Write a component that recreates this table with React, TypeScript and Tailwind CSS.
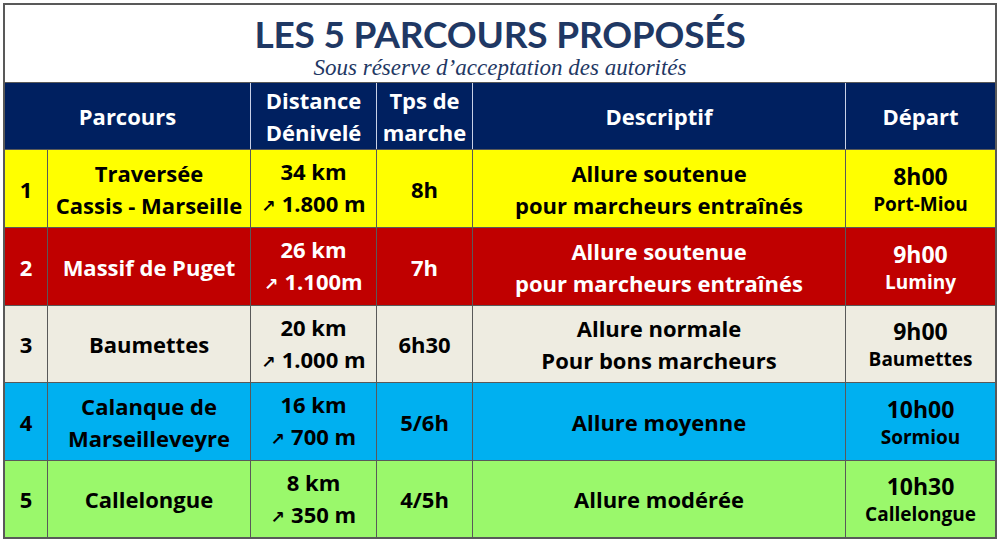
const rows = [
  {
    n: '1',
    name: ['Traversée', 'Cassis - Marseille'],
    km: '34 km',
    elev: '1.800 m',
    time: '8h',
    desc: ['Allure soutenue', 'pour marcheurs entraînés'],
    hour: '8h00',
    place: 'Port-Miou',
    bg: 'bg-[#ffff00]',
    text: 'text-black',
    h: 'h-[78px]',
  },
  {
    n: '2',
    name: ['Massif de Puget'],
    km: '26 km',
    elev: '1.100m',
    time: '7h',
    desc: ['Allure soutenue', 'pour marcheurs entraînés'],
    hour: '9h00',
    place: 'Luminy',
    bg: 'bg-[#c00000]',
    text: 'text-white',
    h: 'h-[78px]',
  },
  {
    n: '3',
    name: ['Baumettes'],
    km: '20 km',
    elev: '1.000 m',
    time: '6h30',
    desc: ['Allure normale', 'Pour bons marcheurs'],
    hour: '9h00',
    place: 'Baumettes',
    bg: 'bg-[#eeece1]',
    text: 'text-black',
    h: 'h-[77px]',
  },
  {
    n: '4',
    name: ['Calanque de', 'Marseilleveyre'],
    km: '16 km',
    elev: '700 m',
    time: '5/6h',
    desc: ['Allure moyenne'],
    hour: '10h00',
    place: 'Sormiou',
    bg: 'bg-[#00b0f0]',
    text: 'text-black',
    h: 'h-[78px]',
  },
  {
    n: '5',
    name: ['Callelongue'],
    km: '8 km',
    elev: '350 m',
    time: '4/5h',
    desc: ['Allure modérée'],
    hour: '10h30',
    place: 'Callelongue',
    bg: 'bg-[#9af86b]',
    text: 'text-black',
    h: 'h-[77px]',
  },
];

const cols = 'grid grid-cols-[43px_203px_126px_96px_373px_149px]';
const cell = 'flex flex-col items-center justify-center text-center border-r border-[#595959]';

export default function App() {
  return (
    <div className="w-[1000px] h-[542px] bg-white pt-[3px] pl-[3px]">
      <div
        className="w-[994px] border-2 border-[#595959] bg-white"
        style={{ fontFamily: '"Open Sans", Lato, sans-serif' }}
      >
        <div className="h-[78px] flex flex-col items-center border-b border-[#595959]">
          <h1
            className="mt-[7px] text-[37px] leading-[44px] font-bold text-[#1f3864] tracking-[-0.2px]"
            style={{ fontFamily: 'Lato, sans-serif' }}
          >
            LES 5 PARCOURS PROPOSÉS
          </h1>
          <p
            className="text-[23px] leading-[24px] italic text-[#1f3864]"
            style={{ fontFamily: '"Liberation Serif", serif' }}
          >
            Sous réserve d’acceptation des autorités
          </p>
        </div>

        <div className="h-[66px] grid grid-cols-[246px_126px_96px_373px_149px] bg-[#002060] text-white font-bold text-[22px] leading-[32px]">
          <div className="flex items-center justify-center border-r border-[#c8d0e6]">Parcours</div>
          <div className="flex flex-col items-center justify-center border-r border-[#c8d0e6]">
            <span>Distance</span>
            <span>Dénivelé</span>
          </div>
          <div className="flex flex-col items-center justify-center border-r border-[#c8d0e6]">
            <span>Tps de</span>
            <span>marche</span>
          </div>
          <div className="flex items-center justify-center border-r border-[#c8d0e6]">Descriptif</div>
          <div className="flex items-center justify-center">Départ</div>
        </div>

        {rows.map((r) => (
          <div
            key={r.n}
            className={`${cols} ${r.h} ${r.bg} ${r.text} font-bold text-[22px] leading-[32px] border-t border-[#595959]`}
          >
            <div className={cell}>{r.n}</div>
            <div className={cell}>
              {r.name.map((l) => (
                <span key={l} className="whitespace-nowrap">{l}</span>
              ))}
            </div>
            <div className={cell}>
              <span>{r.km}</span>
              <span className="whitespace-nowrap">
                <span
                  className="text-[17px] mr-[6px]"
                  style={{ fontFamily: '"DejaVu Sans", sans-serif' }}
                >
                  ↗
                </span>
                {r.elev}
              </span>
            </div>
            <div className={cell}>{r.time}</div>
            <div className={cell}>
              {r.desc.map((l) => (
                <span key={l} className="whitespace-nowrap">{l}</span>
              ))}
            </div>
            <div className="flex flex-col items-center justify-center text-center">
              <span className="text-[23px] leading-[31px]">{r.hour}</span>
              <span className="text-[19px] leading-[25px]">{r.place}</span>
            </div>
          </div>
        ))}
      </div>
    </div>
  );
}
